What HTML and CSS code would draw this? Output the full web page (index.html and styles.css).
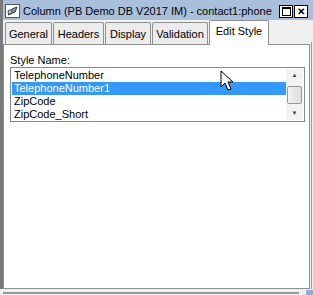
FILE: index.html
```html
<!DOCTYPE html>
<html lang="en">
<head>
    <meta charset="UTF-8">
    <title>Column - contact1:phone</title>
    <link rel="stylesheet" href="styles.css">
</head>
<body>
    <div class="window">
        <div class="titlebar">
            <span class="title-icon">
                <svg width="15" height="14" viewBox="0 0 15 14">
                    <rect x="0.5" y="0.5" width="14" height="13" fill="#fff" stroke="#555"/>
                    <path d="M3 11 L7 5 L12 3 L10 8 Z" fill="#8a9cb8" stroke="#333"/>
                    <circle cx="5" cy="8" r="2" fill="#c8d4e4" stroke="#333"/>
                </svg>
            </span>
            <span class="title-text">Column (PB Demo DB V2017 IM) - contact1:phone</span>
            <span class="title-btns">
                <span class="tbtn"><span class="max-box"></span></span>
                <span class="tbtn close">&#x2715;</span>
            </span>
        </div>

        <div class="body">
            <div class="tabs">
                <div class="tab w-general">General</div>
                <div class="tab w-headers">Headers</div>
                <div class="tab w-display">Display</div>
                <div class="tab w-valid">Validation</div>
                <div class="tab active w-edit">Edit Style</div>
            </div>
            <div class="panel">
                <div class="label">Style Name:</div>
                <div class="listbox">
                    <div class="items">
                        <div class="item">TelephoneNumber</div>
                        <div class="item selected">TelephoneNumber1</div>
                        <div class="item">ZipCode</div>
                        <div class="item">ZipCode_Short</div>
                    </div>
                    <div class="vscroll">
                        <div class="arrow">&#9650;</div>
                        <div class="track"><div class="thumb"></div></div>
                        <div class="arrow">&#9660;</div>
                    </div>
                </div>
            </div>
        </div>
        <div class="statusline">
            <div class="status-bar"></div>
            <div class="status-corner"></div>
        </div>
    </div>

    <!-- mouse pointer over the list -->
    <svg class="cursor" width="14" height="22" viewBox="0 0 14 22">
        <path d="M1 1 L1 17 L5 13 L8 20 L11 19 L8 12 L13 12 Z" fill="#fff" stroke="#000" stroke-width="1"/>
    </svg>
</body>
</html>
```

FILE: styles.css
```css
:root {
    --title-blue: #a9c0dc; --face: #f0f0f0; --tab-face: #ececec;
    --border: #8e8f8f; --dark-edge: #7a7a7a; --select: #3399ff;
}
body {
    margin: 0; background-color: var(--face);
    font-family: Tahoma, 'Liberation Sans', Arial, sans-serif; font-size: 11px; color: #000;
}
.window {
    width: 313px; height: 295px; position: relative; overflow: hidden;
    display: flex; flex-direction: column;
}
.window::before {
    content: ""; position: absolute; left: 0; top: 0; width: 3px; height: 289px;
    background-color: var(--dark-edge);
}
.window::after {
    content: ""; position: absolute; left: 311px; top: 42px; width: 1px; height: 247px;
    background-color: #9a9a9a;
}
.titlebar {
    height: 20px; background-color: var(--title-blue); box-sizing: border-box;
    display: flex; align-items: flex-end; padding: 0 0 1px 5px; flex-shrink: 0;
}
.title-icon { width: 16px; height: 15px; display: flex; margin-right: 2px; }
.title-text { flex: 1; white-space: nowrap; line-height: 15px; }
.title-btns { display: flex; gap: 1px; margin-right: 5px; margin-bottom: 1px; }
.tbtn {
    width: 14px; height: 13px; background: #fff; border: 1px solid #000;
    box-sizing: border-box; display: flex; align-items: center; justify-content: center;
    font-size: 10px; font-weight: bold; line-height: 1;
}
.max-box { width: 7px; height: 6px; border: 1px solid #000; border-top-width: 2px; }

.body { flex: 1; display: flex; flex-direction: column; padding: 0 3px 0 3px; }
.tabs { display: flex; height: 24px; align-items: flex-end; padding-left: 2px; gap: 1px; flex-shrink: 0; }
.tab {
    height: 22px; background-color: var(--tab-face);
    border: 1px solid var(--border); border-bottom: none; box-sizing: border-box;
    display: flex; align-items: center; justify-content: center; white-space: nowrap;
    border-radius: 2px 2px 0 0;
}
.w-general { width: 47px; }
.w-headers { width: 51px; }
.w-display { width: 46px; }
.w-valid { width: 56px; }
.w-edit { width: 60px; }
.tab.active {
    height: 25px; background-color: #fff; margin-bottom: -1px; position: relative;
    z-index: 1; align-items: flex-start; padding-top: 4px;
}
.panel {
    flex: 1; background-color: #fff; border: 1px solid var(--border);
    padding: 9px 4px 0 6px; box-sizing: border-box;
}
.label { line-height: 13px; margin-bottom: 0; }
.listbox {
    height: 55px; border: 1px solid #828790; display: flex; box-sizing: border-box;
    padding: 1px 1px 1px 1px;
}
.items { flex: 1; overflow: hidden; }
.item { height: 13px; line-height: 13px; padding-left: 2px; white-space: nowrap; }
.item.selected { background-color: var(--select); color: #fff; }
.vscroll {
    width: 17px; background-color: #f3f3f3; display: flex; flex-direction: column;
}
.arrow { height: 13px; font-size: 6px; color: #444; text-align: center; line-height: 13px; }
.track { flex: 1; display: flex; align-items: center; }
.thumb {
    width: 15px; height: 18px; margin-left: 1px; border: 1px solid #9a9a9a; border-radius: 2px;
    background: linear-gradient(to right, #f2f2f2, #dcdcdc); box-sizing: border-box;
}
.statusline { height: 6px; display: flex; align-items: flex-end; flex-shrink: 0; padding-left: 3px; }
.status-bar { flex: 1; height: 2px; background-color: #999; margin-right: 7px; margin-bottom: 1px; }
.status-corner { width: 7px; height: 5px; background-color: #8eacd3; }

.cursor { position: absolute; left: 220px; top: 70px; }
```
